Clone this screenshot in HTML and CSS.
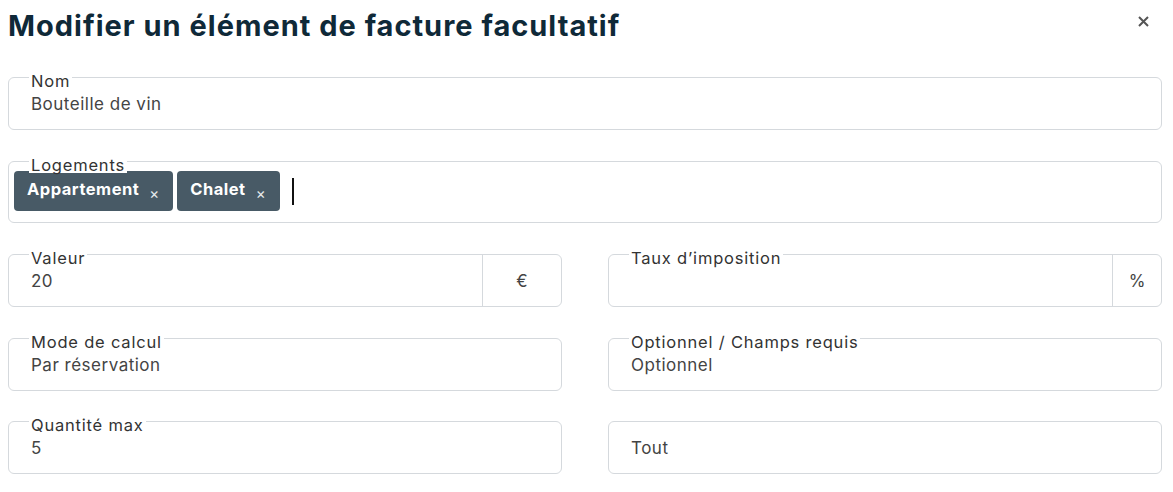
FILE: index.html
```html
<!DOCTYPE html>
<html lang="fr">
<head>
<meta charset="utf-8">
<title>Modifier un élément de facture facultatif</title>
<link rel="stylesheet" href="styles.css">
</head>
<body>
<div class="modal">
  <header class="head">
    <h1 class="title">Modifier un élément de facture facultatif</h1>
    <svg class="close" width="11" height="11" viewBox="0 0 11 11"><path d="M1 1 L10 10 M10 1 L1 10" stroke="#555" stroke-width="2"/></svg>
  </header>
  <div class="form">
    <div class="field">
      <span class="label">Nom</span>
      <div class="value">Bouteille de vin</div>
    </div>
    <div class="field tags-field">
      <span class="label">Logements</span>
      <div class="tags">
        <span class="tag">Appartement <span class="tag-x">×</span></span>
        <span class="tag">Chalet <span class="tag-x">×</span></span>
        <span class="caret"></span>
      </div>
    </div>
    <div class="grid">
      <div class="field addon-field">
        <span class="label">Valeur</span>
        <div class="value">20</div>
        <div class="addon addon-eur">€</div>
      </div>
      <div class="field addon-field">
        <span class="label">Taux d’imposition</span>
        <div class="value"></div>
        <div class="addon addon-pct">%</div>
      </div>
      <div class="field">
        <span class="label">Mode de calcul</span>
        <div class="value">Par réservation</div>
      </div>
      <div class="field">
        <span class="label">Optionnel / Champs requis</span>
        <div class="value">Optionnel</div>
      </div>
      <div class="field">
        <span class="label">Quantité max</span>
        <div class="value">5</div>
      </div>
      <div class="field">
        <div class="value">Tout</div>
      </div>
    </div>
  </div>
</div>
</body>
</html>
```
FILE: styles.css
```css
* { box-sizing: border-box; }
html, body { margin: 0; padding: 0; background: #fff; }
body { font-family: Inter, "Noto Sans", sans-serif; color: #3a3f44; }
.modal { padding: 0 11px 0 8px; }
.head { display: flex; justify-content: space-between; align-items: flex-start; height: 77px; }
.title { margin: 8px 0 0 0; font-size: 29px; font-weight: 700; color: #0f2938; line-height: 36px; letter-spacing: 1px; }
.close { margin: 16px 13px 0 0; }
.form { display: flex; flex-direction: column; gap: 31px; }
.grid { display: grid; grid-template-columns: 1fr 1fr; column-gap: 46px; row-gap: 30.5px; }
.field { position: relative; border: 1px solid #d5d9dd; border-radius: 6px; height: 53px; display: flex; align-items: center; }
.label { position: absolute; left: 20px; top: -5px; padding: 0 2px; background: #fff; font-size: 16.5px; line-height: 16px; color: #333; letter-spacing: 0.8px; }
.value { flex: 1; padding: 0 22px; font-size: 17px; line-height: 22px; color: #444; padding-top: 1px; letter-spacing: 0.5px; }
.addon { display: flex; align-items: center; justify-content: center; height: 100%; border-left: 1px solid #d5d9dd; font-size: 17px; color: #444; }
.addon-eur { width: 79px; }
.addon-pct { width: 49px; }
.tags-field { height: 62px; align-items: flex-start; }
.tags { display: flex; align-items: center; gap: 4px; padding: 9px 0 0 5px; }
.tag { display: inline-flex; align-items: flex-start; background: #485a66; color: #fff; border-radius: 4px; height: 40px; padding: 8px 14px 0 13px; font-size: 16.5px; font-weight: 700; line-height: 20px; letter-spacing: 0.5px; }
.tag-x { font-weight: 400; font-size: 15px; margin-left: 10px; margin-top: 5px; color: #e6eaec; letter-spacing: 0; }
.caret { width: 2px; height: 27px; background: #111; margin-left: 8px; }
```
